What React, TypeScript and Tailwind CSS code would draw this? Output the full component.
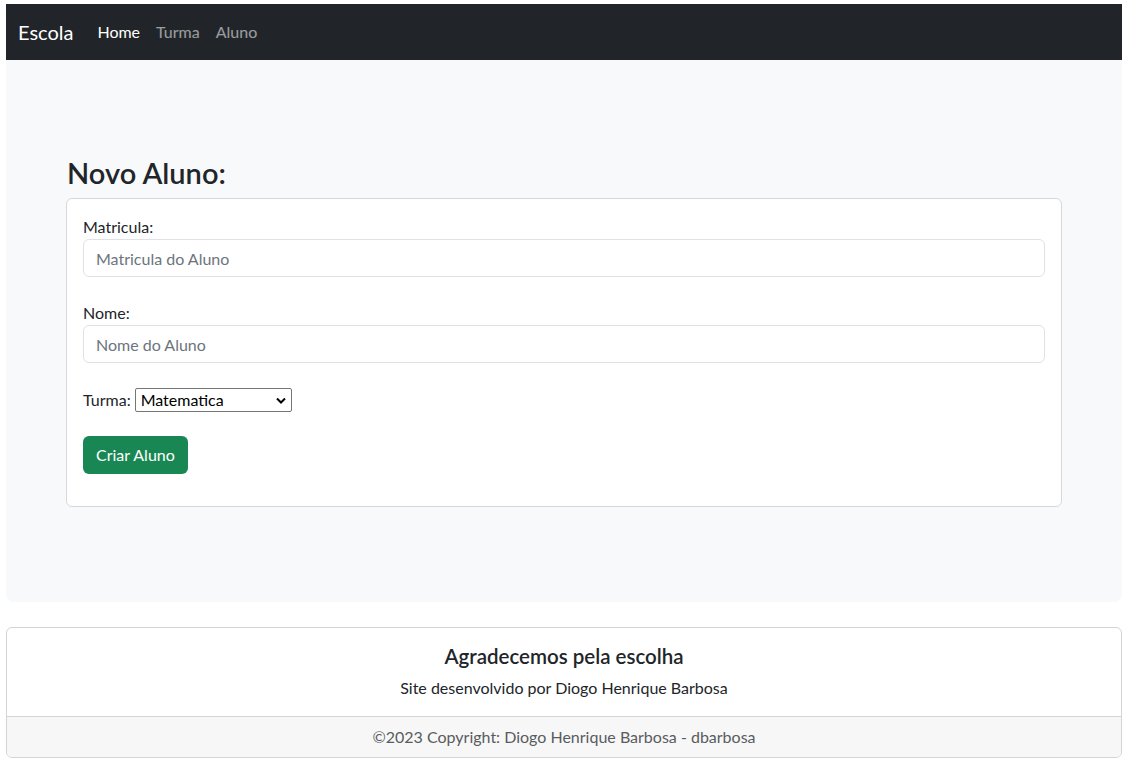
export default function App() {
  const font = { fontFamily: '"Segoe UI", Lato, "Liberation Sans", sans-serif' };

  return (
    <div className="min-h-[776px] bg-white pt-1 pl-[6px] pr-[13px] text-[16px] text-[#212529]" style={font}>
      {/* Navbar */}
      <nav className="flex h-14 items-center bg-[#212529] px-3">
        <span className="mr-6 text-[20px] text-white">Escola</span>
        <div className="flex gap-4">
          <a className="text-white">Home</a>
          <a className="text-white/55">Turma</a>
          <a className="text-white/55">Aluno</a>
        </div>
      </nav>

      {/* Form section */}
      <section className="rounded-b-lg bg-[#f8f9fa] px-[60px] pt-[96px] pb-[95px]">
        <h2 className="mb-2 pl-px text-[29px] leading-[34px] font-semibold">Novo Aluno:</h2>
        <form className="rounded-md border border-[#d6d8db] bg-white p-4">
          <label className="block leading-6">Matricula:</label>
          <input
            type="text"
            placeholder="Matricula do Aluno"
            className="mb-6 block h-[38px] w-full rounded-md border border-[#dee2e6] px-3 outline-none placeholder:text-[#6c757d]"
          />

          <label className="block leading-6">Nome:</label>
          <input
            type="text"
            placeholder="Nome do Aluno"
            className="mb-[25px] block h-[38px] w-full rounded-md border border-[#dee2e6] px-3 outline-none placeholder:text-[#6c757d]"
          />

          <div className="mb-6 flex h-6 items-center">
            <span className="mr-1">Turma:</span>
            <div className="relative">
              <select className="h-6 w-[157px] appearance-none rounded-[2px] border border-[#767676] bg-white pl-[5px] leading-none text-black outline-none">
                <option>Matematica</option>
                <option>Portugues</option>
              </select>
              <svg
                className="pointer-events-none absolute top-[9px] right-[6px]"
                width="10"
                height="7"
                viewBox="0 0 10 7"
              >
                <path d="M1 1.5 L5 5.5 L9 1.5" fill="none" stroke="#000" strokeWidth="2" />
              </svg>
            </div>
          </div>

          <button
            type="button"
            className="mb-4 h-[38px] rounded-md bg-[#198754] px-[13px] text-white"
          >
            Criar Aluno
          </button>
        </form>
      </section>

      {/* Footer */}
      <footer className="mt-[25px] overflow-hidden rounded-md border border-[#d3d4d5] text-center">
        <div className="px-4 pt-4 pb-4">
          <h5 className="mb-2 text-[20.5px] leading-6 font-semibold">Agradecemos pela escolha</h5>
          <p className="leading-6">Site desenvolvido por Diogo Henrique Barbosa</p>
        </div>
        <div className="border-t border-[#d3d4d5] bg-[#f7f7f7] py-2 leading-6 text-[#595c5f]">
          ©2023 Copyright: Diogo Henrique Barbosa - dbarbosa
        </div>
      </footer>
    </div>
  );
}
